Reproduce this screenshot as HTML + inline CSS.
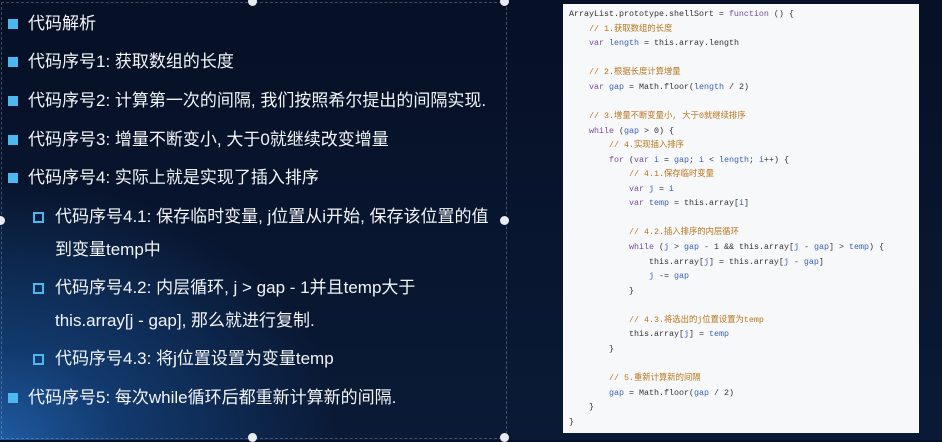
<!DOCTYPE html>
<html><head><meta charset="utf-8"><style>
body{margin:0;width:942px;height:440px;overflow:hidden;position:relative;
background:radial-gradient(ellipse 340px 260px at 0px 440px,#1f5aa0 0%,#123a6e 35%,rgba(10,22,45,0) 100%),linear-gradient(180deg,#061026 0%,#0a1a36 100%);
font-family:"Liberation Sans","Noto Sans CJK SC",sans-serif;color:#f2f4f8}
.sel{position:absolute;left:1px;top:2px;width:504px;height:435px;border:1px dashed rgba(200,210,230,.3)}
.h{position:absolute;width:9px;height:9px;border-radius:50%;background:#e8ecf2;margin:-5px 0 0 -5px}
.b{position:absolute;font-size:17px;white-space:nowrap;line-height:20px}
.b1::before{content:"";position:absolute;left:-20px;top:5px;width:10px;height:10px;background:#4cb8f0}
.b2::before{content:"";position:absolute;left:-22px;top:5px;width:7px;height:7px;border:2px solid #4cb8f0}
.code{position:absolute;left:563px;top:4px;width:356px;height:429px;background:#f7f8fa}
.code pre{margin:0;position:absolute;left:6px;top:3px;font:8.33px/14.57px "Liberation Mono","Noto Sans CJK SC",monospace;color:#333}
.k{color:#7a4a9a}.c{color:#b8741a}.v{color:#3a5fb0}
</style></head><body>
<div class="sel"></div>
<div class="h" style="left:253px;top:2px"></div><div class="h" style="left:505px;top:2px"></div>
<div class="h" style="left:1px;top:221px"></div><div class="h" style="left:505px;top:221px"></div>
<div class="h" style="left:253px;top:438px"></div><div class="h" style="left:505px;top:438px"></div>
<div class="b b1" style="left:28px;top:14px">代码解析</div>
<div class="b b1" style="left:28px;top:52px">代码序号1: 获取数组的长度</div>
<div class="b b1" style="left:28px;top:91px">代码序号2: 计算第一次的间隔, 我们按照希尔提出的间隔实现.</div>
<div class="b b1" style="left:28px;top:130px">代码序号3: 增量不断变小, 大于0就继续改变增量</div>
<div class="b b1" style="left:28px;top:168px">代码序号4: 实际上就是实现了插入排序</div>
<div class="b b2" style="left:55px;top:207px">代码序号4.1: 保存临时变量, j位置从i开始, 保存该位置的值</div>
<div class="b" style="left:55px;top:240px">到变量temp中</div>
<div class="b b2" style="left:55px;top:278px">代码序号4.2: 内层循环, j &gt; gap - 1并且temp大于</div>
<div class="b" style="left:55px;top:311px">this.array[j - gap], 那么就进行复制.</div>
<div class="b b2" style="left:55px;top:349px">代码序号4.3: 将j位置设置为变量temp</div>
<div class="b b1" style="left:28px;top:388px">代码序号5: 每次while循环后都重新计算新的间隔.</div>
<div class="code"><pre>ArrayList.prototype.shellSort = <span class="k">function</span> () {
    <span class="c">// 1.获取数组的长度</span>
    <span class="k">var</span> <span class="v">length</span> = this.array.length

    <span class="c">// 2.根据长度计算增量</span>
    <span class="k">var</span> <span class="v">gap</span> = Math.floor(<span class="v">length</span> / 2)

    <span class="c">// 3.增量不断变量小, 大于0就继续排序</span>
    <span class="k">while</span> (<span class="v">gap</span> &gt; 0) {
        <span class="c">// 4.实现插入排序</span>
        <span class="k">for</span> (<span class="k">var</span> <span class="v">i</span> = <span class="v">gap</span>; <span class="v">i</span> &lt; <span class="v">length</span>; <span class="v">i</span>++) {
            <span class="c">// 4.1.保存临时变量</span>
            <span class="k">var</span> <span class="v">j</span> = <span class="v">i</span>
            <span class="k">var</span> <span class="v">temp</span> = this.array[<span class="v">i</span>]

            <span class="c">// 4.2.插入排序的内层循环</span>
            <span class="k">while</span> (<span class="v">j</span> &gt; <span class="v">gap</span> - 1 &amp;&amp; this.array[<span class="v">j</span> - <span class="v">gap</span>] &gt; <span class="v">temp</span>) {
                this.array[<span class="v">j</span>] = this.array[<span class="v">j</span> - <span class="v">gap</span>]
                <span class="v">j</span> -= <span class="v">gap</span>
            }

            <span class="c">// 4.3.将选出的j位置设置为temp</span>
            this.array[<span class="v">j</span>] = <span class="v">temp</span>
        }

        <span class="c">// 5.重新计算新的间隔</span>
        <span class="v">gap</span> = Math.floor(<span class="v">gap</span> / 2)
    }
}</pre></div>
</body></html>
